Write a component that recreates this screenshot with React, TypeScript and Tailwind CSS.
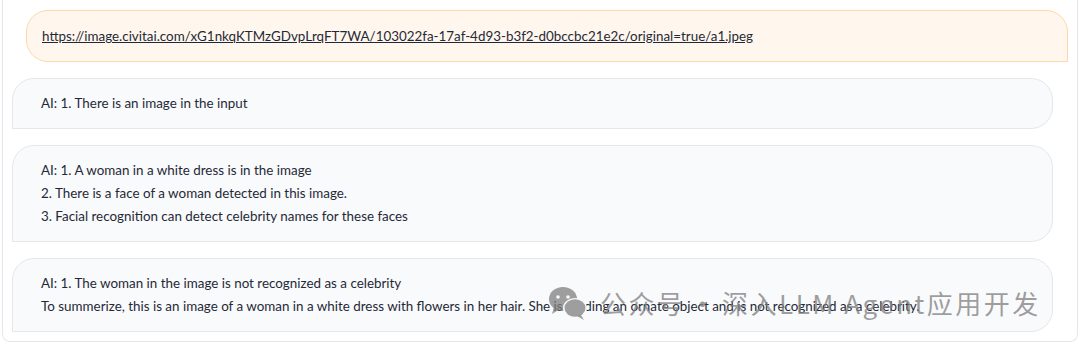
import React from 'react';

const botMessages = [
  ['AI: 1. There is an image in the input'],
  [
    'AI: 1. A woman in a white dress is in the image',
    '2. There is a face of a woman detected in this image.',
    '3. Facial recognition can detect celebrity names for these faces',
  ],
  [
    'AI: 1. The woman in the image is not recognized as a celebrity',
    'To summerize, this is an image of a woman in a white dress with flowers in her hair. She is holding an ornate object and is not recognized as a celebrity.',
  ],
];

const url =
  'https://image.civitai.com/xG1nkqKTMzGDvpLrqFT7WA/103022fa-17af-4d93-b3f2-d0bccbc21e2c/original=true/a1.jpeg';

function WeChatIcon() {
  return (
    <svg width="40" height="36" viewBox="0 0 40 36" className="fill-current">
      <ellipse cx="15" cy="14" rx="14" ry="12" />
      <path d="M6 22 L4 29 L12 24 Z" />
      <ellipse cx="27" cy="23" rx="12" ry="10" fill="#f9fafb" />
      <ellipse cx="27" cy="23" rx="10.5" ry="8.8" />
      <path d="M33 30 L36 35 L29 31 Z" />
      <circle cx="10" cy="12" r="1.8" fill="#f9fafb" />
      <circle cx="20" cy="12" r="1.8" fill="#f9fafb" />
    </svg>
  );
}

export default function App() {
  return (
    <div
      className="w-[1080px] h-[348px] bg-white px-[2px] overflow-hidden text-[#1f2937]"
      style={{ fontFamily: 'Lato, "Noto Sans CJK SC", sans-serif' }}
    >
      <div className="relative flex flex-col gap-4 border border-t-0 border-gray-200 rounded-b-lg px-[9px] pt-[10px] pb-[9px]">
        {/* User message */}
        <div className="self-end w-[1042px] rounded-[22px] rounded-br-none border border-[#fed7aa] bg-[#fff7ed] pl-[15px] pr-4 py-[13px] text-[13.4px] leading-[24px]">
          <a href="#" className="underline">
            {url}
          </a>
        </div>

        {/* Bot messages */}
        {botMessages.map((lines, i) => (
          <div
            key={i}
            className="self-start w-[1041px] rounded-[22px] rounded-bl-none border border-gray-200 bg-[#f9fafb] pl-[28px] pr-4 py-[13px] text-[13.4px] leading-[23px]"
          >
            {lines.map((l) => (
              <p key={l}>{l}</p>
            ))}
          </div>
        ))}

        {/* Watermark */}
        <div
          className="absolute left-[545px] top-[285px] flex items-center gap-[12px] text-[#7f7f7f]/75 pointer-events-none"
          style={{ fontFamily: '"Noto Sans CJK SC", sans-serif' }}
        >
          <WeChatIcon />
          <span className="text-[26px] leading-none tracking-[2.5px]">
            公众号<span className="mx-[4px]">·</span>深入LLM Agent应用开发
          </span>
        </div>
      </div>
    </div>
  );
}
